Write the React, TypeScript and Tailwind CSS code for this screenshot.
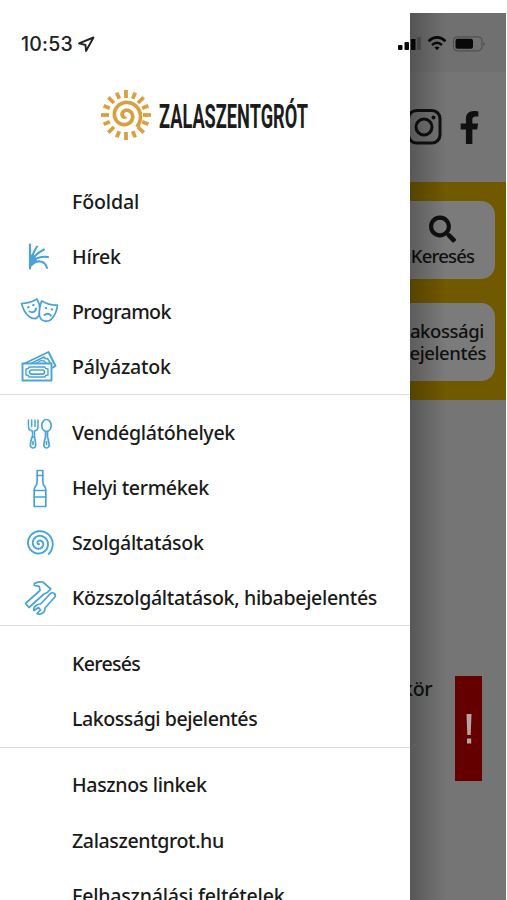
import React from 'react'

import { FaFacebookF, FaSearch } from 'react-icons/fa'

type MenuItem = {
    label: string
    tracking: string
    icon?: React.ReactNode
}

// Archimedean spiral winding clockwise, ending at endAngle degrees
function spiral(cx: number, cy: number, from: number, to: number, turns: number, endAngle: number) {
    const steps = 72
    const points: string[] = []

    for (let i = 0; i <= steps; i++) {
        const t = i / steps
        const angle = ((endAngle - 360 * turns * (1 - t)) * Math.PI) / 180
        const r = from + (to - from) * t
        points.push(`${(cx + r * Math.cos(angle)).toFixed(2)} ${(cy + r * Math.sin(angle)).toFixed(2)}`)
    }

    return 'M' + points.join('L')
}

function Icon({ children }: { children: React.ReactNode }) {
    return (
        <svg className="mt-[2px] block" width="40" height="40" viewBox="0 0 40 40" fill="none" stroke="#4aa3d8"
            strokeWidth="1.7" strokeLinecap="round" strokeLinejoin="round">
            {children}
        </svg>
    )
}

const NewsIcon = () => (
    <Icon>
        <path d="M10 7.500v24" strokeWidth="2.200" />
        <path d="M10.500 24C12 19 14 14 17 9.500M11 25C13.500 19 18 15.500 24 12.500M11 26.500C15 20.500 21 19 28 20M11 28.500C17 22 25 23.500 27 31" strokeWidth="2" />
        <path d="M10 31V18l3-1 2.500 3 1.500 3.500-4 2z" fill="#4aa3d8" stroke="none" />
    </Icon>
)

const MasksIcon = () => (
    <Icon>
        <path d="M1.500 11.500C7 11.500 12 10 17 7c3 5 5 16-1 19.500C9 27 4 20 1.500 11.500z" />
        <path d="M21.500 9C27 12 32 13.500 37.500 13 36.500 22 31.500 30.500 24.500 29c-8-2-5-13-3-20z" fill="#fff" />
        <path d="M8 15.300l.8-.3M13 13.200l.8-.3M9.500 19.500c3 1.500 6 .5 6.500-3M25.500 16l.8.2M31.500 17.300l.8.2M24.500 23c2-2 5-1.500 6.500.8" strokeWidth="1.900" />
    </Icon>
)

const TicketsIcon = () => (
    <Icon>
        <path d="M2.500 15.500h29v17h-29z" strokeWidth="1.900" />
        <path d="M9 19h16q0 2 3 2v6q-3 0-3 2H9q0-2-3-2v-6q3 0 3-2z" strokeWidth="1.400" />
        <rect x="9.500" y="22" width="15" height="4.200" rx="2.100" />
        <path d="M5.500 15L28.500 4l7 14-3.500 2" strokeWidth="1.900" />
        <path d="M12 15l12-6q1.500 2.500 3.500 1.500l3 5M17 15q6-5 9 0" strokeWidth="1.500" />
    </Icon>
)

const CutleryIcon = () => (
    <Icon>
        <path d="M8.500 6v6.500q0 4 4 4.500V23M18 6v6.500q0 4-3.500 4.500V23M11.700 6v6.500M15 6v6.500" strokeWidth="1.500" />
        <path d="M12 23q-2 6.500-1.500 9.500 2.500 3 5 0Q16 29.500 14.500 23z" />
        <ellipse cx="26.500" cy="11.500" rx="4.700" ry="6" />
        <path d="M25.500 18v5q-2 6.500-1.500 9.500 2.500 3 5 0Q29.500 29.500 27.500 23v-5M13 27.500v3M26.500 27.500v3" />
    </Icon>
)

const BottleIcon = () => (
    <Icon>
        <path d="M17.200 1.500h5.600v11q0 3 2.200 5.500.8 1 .8 3v16.500H14.200V21q0-2 .8-3 2.200-2.500 2.200-5.500z" />
        <path d="M17.200 6.500h5.600M14.200 21.500h11.500M14.200 28h11.500" />
    </Icon>
)

const SpiralIcon = () => (
    <Icon>
        <path d={spiral(19.2, 19.5, 0.6, 14.2, 2.85, 47)} strokeWidth="1.900" />
    </Icon>
)

const ToolsIcon = () => (
    <Icon>
        <path d="M20 11.500L5.500 24.500l3.500 4L24 15l2.800-1.200 4-3.800-8-7q-5-.8-8.500 1.500v2l5 .8z" />
        <path d="M20.500 25L30.500 14.500q2-1.500 3.800 0t.4 3.700L25 29q0 5-4.500 6-2 .5-3.500-.5l3.500-3.500-2-2.500-4.500 3Q13 28.500 16 26.500q2-1.500 4.500-1.500z" fill="#fff" />
    </Icon>
)

const sections: MenuItem[][] = [
    [
        { label: 'Főoldal', tracking: 'tracking-[-0.150px]' },
        { label: 'Hírek', tracking: 'tracking-[-0.250px]', icon: <NewsIcon /> },
        { label: 'Programok', tracking: 'tracking-[-0.650px]', icon: <MasksIcon /> },
        { label: 'Pályázatok', tracking: 'tracking-[-0.220px]', icon: <TicketsIcon /> },
    ],
    [
        { label: 'Vendéglátóhelyek', tracking: 'tracking-[-0.320px]', icon: <CutleryIcon /> },
        { label: 'Helyi termékek', tracking: 'tracking-[-0.370px]', icon: <BottleIcon /> },
        { label: 'Szolgáltatások', tracking: 'tracking-[-0.310px]', icon: <SpiralIcon /> },
        { label: 'Közszolgáltatások, hibabejelentés', tracking: 'tracking-[-0.350px]', icon: <ToolsIcon /> },
    ],
    [
        { label: 'Keresés', tracking: 'tracking-[-0.700px]' },
        { label: 'Lakossági bejelentés', tracking: 'tracking-[-0.460px]' },
    ],
    [
        { label: 'Hasznos linkek', tracking: 'tracking-[-0.360px]' },
        { label: 'Zalaszentgrot.hu', tracking: 'tracking-[-0.400px]' },
        { label: 'Felhasználási feltételek', tracking: 'tracking-[-0.220px]' },
    ],
]

function Logo() {
    const rays = Array.from({ length: 16 }, (_, i) => i * 22.5)

    return (
        <svg className="ml-[100px] block" width="212" height="56" viewBox="0 0 212 56" role="img">
            <g stroke="#d9a03f" fill="none">
                {rays.map((angle, i) => (
                    <path key={angle} d={i % 2 ? 'M26 10.500V3.800' : 'M26 11V3'} strokeWidth="3.800"
                        transform={`rotate(${angle} 26 28)`} />
                ))}
                <path d={spiral(25.5, 28.5, 1, 16, 1.9, 45)} strokeWidth="3.700" />
            </g>
            <text x="59" y="41" fontSize="32.500" fontWeight="700" fill="#1c1c1c" textLength="149"
                lengthAdjust="spacingAndGlyphs" fontFamily="Roboto, sans-serif">
                ZALASZENTGRÓT
            </text>
        </svg>
    )
}

function Drawer() {
    return (
        <aside className="relative z-10 h-full w-[410px] shrink-0 bg-white">
            <div className="flex h-[74px] items-start pt-[20px] pl-[21px]">
                <span className="font-['Inter'] text-[19.500px] leading-[22px] font-medium tracking-[0.2px] text-[#222]">10:53</span>
                <svg className="mt-[3px] ml-[4px]" width="18" height="17" viewBox="0 0 18 17" fill="none"
                    stroke="#222" strokeWidth="1.900" strokeLinejoin="round">
                    <path d="M16.500 1.500L2 7.300l6.500 1.700.5 6z" />
                </svg>
            </div>

            <Logo />

            <nav className="mt-[30.7px]">
                {sections.map((items, i) => (
                    <ul key={i} className={i < sections.length - 1 ? 'mb-[10px] border-b border-[#dcdcdc]' : ''}>
                        {items.map(item => (
                            <li key={item.label} className="flex h-[55.1px] items-center pl-[20px]">
                                <span className="w-[52px] shrink-0">{item.icon}</span>
                                <span className={`whitespace-nowrap text-[19.600px] font-medium text-[#1a1a1a] ${item.tracking}`}>
                                    {item.label}
                                </span>
                            </li>
                        ))}
                    </ul>
                ))}
            </nav>
        </aside>
    )
}

function DimmedPage() {
    return (
        <div className="relative h-full w-[96px] overflow-hidden bg-[#757575] text-[#101010]">
            <div className="flex h-[59px] items-start bg-[#707070] pt-[23px]">
                <svg className="mt-[1px] shrink-0" width="12" height="14" viewBox="0 0 12 14">
                    <path d="M1 2h4.500v11H1z" fill="#080808" />
                    <path d="M7 0h4v13H7z" fill="#565656" />
                </svg>
                <svg className="ml-[5px] shrink-0" width="20" height="15" viewBox="0 0 20 15" fill="none" stroke="#080808">
                    <path d="M1.500 5.200Q10-2.300 18.500 5.200" strokeWidth="2.600" />
                    <path d="M5 9q5-4.500 10 0" strokeWidth="2.400" />
                    <path d="M7.500 11.500q2.500-2 5 0L10 14.200z" fill="#080808" stroke="none" />
                </svg>
                <svg className="ml-[5px] shrink-0" width="34" height="16" viewBox="0 0 34 16">
                    <rect x="1.500" y=".8" width="28.500" height="14" rx="4" fill="none" stroke="#505050" strokeWidth="1.200" />
                    <rect x="3.500" y="2.800" width="17.500" height="10" rx="2" fill="#080808" />
                    <path d="M31.500 5.500q3 2.300 0 4.600z" fill="#505050" />
                </svg>
            </div>

            <div className="flex h-[110px] items-start pt-[37px]">
                <svg className="-ml-[3px] shrink-0" width="35" height="36" viewBox="0 0 35 36" fill="none" stroke="#101010" strokeWidth="3">
                    <rect x="1.500" y="1.500" width="31.500" height="32.500" rx="8" />
                    <circle cx="17" cy="18" r="8" />
                    <circle cx="26.500" cy="8.500" r="2" fill="#101010" stroke="none" />
                </svg>
                <FaFacebookF className="mt-[1.500px] ml-[17px] h-[33px] w-[21px] shrink-0" />
            </div>

            <div className="flex h-[218px] flex-col gap-[24px] bg-[#715900] pt-[19px]">
                <div className="flex h-[78px] w-[85px] flex-col items-center rounded-r-[14px] bg-[#7b7b7b] pt-[14px] pr-[20px]">
                    <FaSearch className="h-[28px] w-[27px] shrink-0" />
                    <span className="whitespace-nowrap text-[18.500px] leading-[25px] font-medium tracking-[-0.8px]">Keresés</span>
                </div>
                <div className="flex h-[78px] w-[85px] items-center justify-end overflow-hidden rounded-r-[14px] bg-[#7b7b7b] pr-[9px]">
                    <p className="text-center text-[18.500px] leading-[22px] font-medium tracking-[-0.4px]">
                        Lakossági<br />bejelentés
                    </p>
                </div>
            </div>

            <div className="flex items-start justify-between pt-[276px] pr-[24px]">
                <span className="-ml-[8px] text-[19.600px] leading-[26px] font-medium tracking-[-0.3px]">kör</span>
                <div className="flex h-[105px] w-[27px] items-center justify-center bg-[#640000] text-[#b4a4a4]">
                    <svg width="8" height="30" viewBox="0 0 8 30" fill="currentColor">
                        <path d="M1.500 0h5l-.8 21H2.300zM2 24.500h4.200v5H2z" />
                    </svg>
                </div>
            </div>

            <div className="absolute inset-y-0 left-0 w-[36px] bg-gradient-to-r from-black/25 to-transparent" />
        </div>
    )
}

export default function App() {
    return (
        <div className="h-[900px] w-[507px] overflow-hidden bg-white pt-[13px] font-['Noto_Sans',sans-serif]">
            <div className="relative flex h-[887px]">
                <Drawer />
                <DimmedPage />
                <svg className="absolute top-[26px] left-[398px] z-20" width="12" height="12" viewBox="0 0 12 12" fill="#080808">
                    <rect x="0" y="6" width="4.500" height="5" rx="1" />
                    <rect x="6.500" y="3" width="4.500" height="8" rx="1" />
                </svg>
            </div>
        </div>
    )
}
